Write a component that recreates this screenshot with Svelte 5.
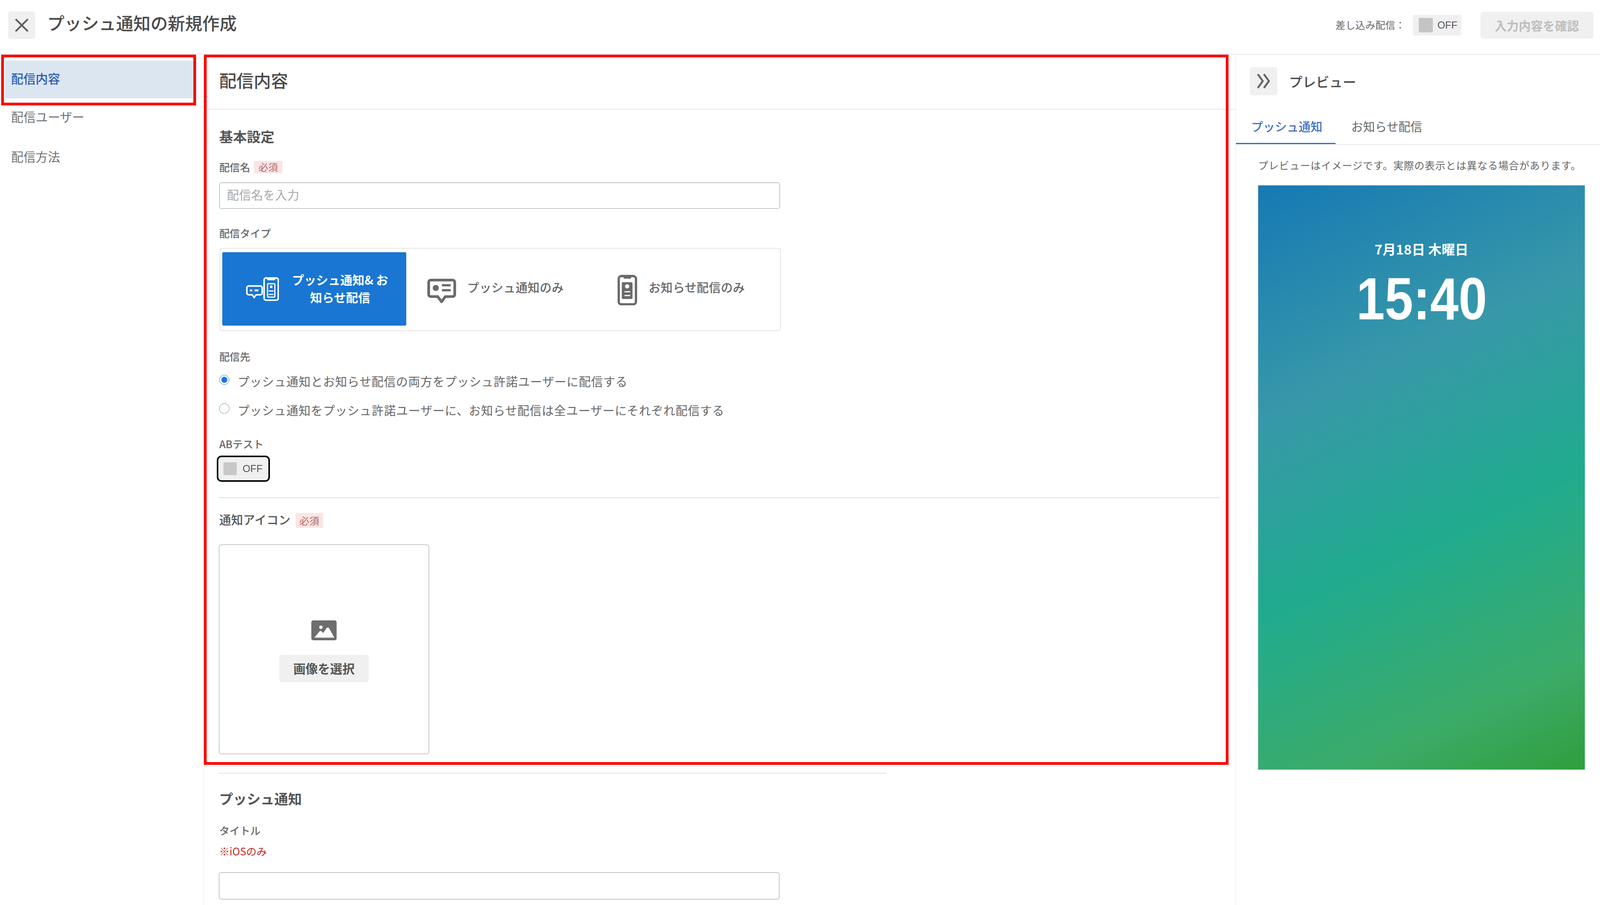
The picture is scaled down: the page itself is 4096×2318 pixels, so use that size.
<script>
  const navItems = ['配信ユーザー', '配信方法'];
</script>

<div class="app">
  <header class="topbar">
    <button class="close" aria-label="閉じる">
      <svg width="36" height="34" viewBox="0 0 36 34"><path d="M2 1 L34 33 M34 1 L2 33" fill="none" stroke="#5f5f5f" stroke-width="4.5"/></svg>
    </button>
    <h1 class="page-title">プッシュ通知の新規作成</h1>
    <div class="top-actions">
      <span class="seg-label">差し込み配信：</span>
      <div class="mini-toggle">
        <span class="knob"></span>
        <span class="off">OFF</span>
      </div>
      <button class="confirm">入力内容を確認</button>
    </div>
  </header>

  <div class="columns">
    <nav class="side">
      <div class="nav-item active">配信内容</div>
      {#each navItems as item}
        <div class="nav-item">{item}</div>
      {/each}
    </nav>

    <main class="main">
      <div class="main-head">配信内容</div>
      <div class="form">
        <h2 class="sec first">基本設定</h2>

        <div class="label-row name-row">
          <span class="lbl">配信名</span><span class="req">必須</span>
        </div>
        <input class="text name-input" placeholder="配信名を入力" />

        <div class="lbl block type-label">配信タイプ</div>
        <div class="type-box">
          <div class="type-card on">
            <svg width="87" height="62" viewBox="0 0 87 62" fill="none" stroke="#fff">
              <path d="M8 23 H38 a5 5 0 0 1 5 5 V41 a5 5 0 0 1 -5 5 H27 L22 53 L17 46 H8 a5 5 0 0 1 -5 -5 V28 a5 5 0 0 1 5 -5 Z" stroke-width="4"/>
              <path d="M11 34.5 H17 M23 34.5 H33" stroke-width="5"/>
              <rect x="48" y="2" width="37" height="58" rx="5" stroke-width="4"/>
              <path d="M54 3 L57 8 H76 L79 3 Z" fill="#fff" stroke="none"/>
              <rect x="57" y="17" width="19" height="35" rx="2" stroke-width="3"/>
              <circle cx="66.5" cy="25" r="3.5" fill="#fff" stroke="none"/>
              <path d="M60 36 H73 M60 45 H73" stroke-width="3"/>
            </svg>
            <span class="on-text">プッシュ通知&amp; お<br />知らせ配信</span>
          </div>
          <div class="type-card mid">
            <svg width="75" height="64" viewBox="0 0 75 64" fill="none" stroke="#6a6a6a">
              <path d="M9 3.5 H66 a5.5 5.5 0 0 1 5.5 5.5 V41 a5.5 5.5 0 0 1 -5.5 5.5 H47 L37 60 L27 46.5 H9 a5.5 5.5 0 0 1 -5.5 -5.5 V9 a5.5 5.5 0 0 1 5.5 -5.5 Z" stroke-width="7" stroke-linejoin="round"/>
              <circle cx="22" cy="24" r="8" fill="#6a6a6a" stroke="none"/>
              <path d="M38 17 H61 M38 30 H61" stroke-width="6"/>
            </svg>
            <span class="type-text">プッシュ通知のみ</span>
          </div>
          <div class="type-card last">
            <svg width="51" height="80" viewBox="0 0 51 80" fill="none">
              <rect x="3" y="3" width="45" height="74" rx="7" stroke="#6a6a6a" stroke-width="6"/>
              <path d="M13 3 L17 10 H34 L38 3 Z" fill="#6a6a6a"/>
              <rect x="11" y="19" width="28" height="44" rx="3" fill="#6a6a6a"/>
              <circle cx="25" cy="30" r="5.5" fill="#fff"/>
              <path d="M18 44 H33 M18 54 H33" stroke="#fff" stroke-width="3"/>
            </svg>
            <span class="type-text">お知らせ配信のみ</span>
          </div>
        </div>

        <div class="lbl block dest-label">配信先</div>
        <label class="radio r1">
          <input type="radio" name="dest" checked />
          <span>プッシュ通知とお知らせ配信の両方をプッシュ許諾ユーザーに配信する</span>
        </label>
        <label class="radio r2">
          <input type="radio" name="dest" />
          <span>プッシュ通知をプッシュ許諾ユーザーに、お知らせ配信は全ユーザーにそれぞれ配信する</span>
        </label>

        <div class="lbl block ab-label">ABテスト</div>
        <div class="ab-toggle">
          <span class="ab-knob"></span>
          <span class="ab-off">OFF</span>
        </div>

        <hr class="rule wide" />

        <div class="label-row icon-row">
          <span class="lbl-big">通知アイコン</span><span class="req big">必須</span>
        </div>
        <div class="picker">
          <svg width="66" height="52" viewBox="0 0 66 52">
            <rect width="66" height="52" rx="5" fill="#6e6e6e"/>
            <circle cx="25" cy="18" r="4.5" fill="#fff"/>
            <path d="M8 45 L21 29 Q24 26 27 29 L31 33 L40 20 Q43 17 46 20 L60 45 Z" fill="#fff"/>
          </svg>
          <button class="pick-btn">画像を選択</button>
        </div>

        <hr class="rule narrow" />

        <h2 class="sec push">プッシュ通知</h2>
        <div class="lbl block title-label">タイトル</div>
        <div class="ios">※iOSのみ</div>
        <input class="text title-input" />
      </div>
    </main>

    <aside class="preview">
      <div class="pv-head">
        <button class="pv-toggle" aria-label="閉じる">
          <svg width="36" height="38" viewBox="0 0 36 38" fill="none" stroke="#666" stroke-width="5"><path d="M3 1 L16 19 L3 37 M19 1 L32 19 L19 37"/></svg>
        </button>
        <span class="pv-title">プレビュー</span>
      </div>
      <div class="tabs">
        <div class="tab active">プッシュ通知</div>
        <div class="tab">お知らせ配信</div>
      </div>
      <p class="note">プレビューはイメージです。実際の表示とは異なる場合があります。</p>
      <div class="phone">
        <div class="date">7月18日 木曜日</div>
        <div class="time">15:40</div>
      </div>
    </aside>
  </div>

  <div class="mark mark-a"></div>
  <div class="mark mark-b"></div>
</div>

<style>
  :global(html), :global(body) {
    margin: 0;
    overflow: hidden;
    background: #fff;
  }
  .app {
    zoom: 0.981;
    position: relative;
    width: 4175px;
    height: 2364px;
    display: flex;
    flex-direction: column;
    overflow: hidden;
    background: #fff;
    color: #555;
    font-family: "Noto Sans CJK JP", "Noto Sans", sans-serif;
  }
  button {
    font-family: inherit;
    border: none;
    padding: 0;
    cursor: pointer;
  }

  /* top bar */
  .topbar {
    box-sizing: border-box;
    height: 143px;
    flex: none;
    display: flex;
    align-items: center;
    padding: 0 17px 9px 21px;
    border-bottom: 3px solid #e8e8ee;
  }
  .close {
    width: 71px;
    height: 72px;
    background: #f0f0f0;
    border-radius: 6px;
    display: flex;
    align-items: center;
    justify-content: center;
    margin-right: 31px;
  }
  .page-title {
    margin: 0;
    font-size: 45px;
    font-weight: 500;
    line-height: 50px;
    color: #4a4a4a;
    position: relative;
    top: -6px;
  }
  .top-actions {
    margin-left: auto;
    display: flex;
    align-items: center;
  }
  .seg-label {
    font-size: 26px;
    color: #666;
    margin-right: 20px;
    position: relative;
    top: -2px;
  }
  .mini-toggle {
    width: 126px;
    height: 54px;
    box-sizing: border-box;
    background: #f0f0f0;
    border-radius: 4px;
    display: flex;
    align-items: center;
    padding-left: 15px;
    margin-right: 50px;
  }
  .knob {
    width: 37px;
    height: 38px;
    background: #c4c4c4;
    border-radius: 2px;
    margin-right: 12px;
  }
  .off {
    font-size: 26px;
    color: #555;
    font-family: "Liberation Sans", sans-serif;
  }
  .confirm {
    width: 295px;
    height: 70px;
    background: #f0f0f0;
    border-radius: 8px;
    color: #bdbdbd;
    font-size: 31.5px;
    font-weight: 700;
  }

  .columns {
    flex: 1;
    display: flex;
    min-height: 0;
  }

  /* side nav */
  .side {
    box-sizing: border-box;
    width: 532px;
    flex: none;
    border-right: 2px solid #e8e8ee;
    padding: 15px 0 0 13px;
  }
  .nav-item {
    box-sizing: border-box;
    width: 492px;
    height: 104px;
    padding: 31px 0 0 16px;
    font-size: 32px;
    line-height: 32px;
    color: #707070;
  }
  .nav-item.active {
    height: 99px;
    background: #dce6f1;
    color: #2a5db0;
    font-weight: 500;
  }

  /* main form */
  .main {
    box-sizing: border-box;
    width: 2693px;
    flex: none;
    border-right: 2px solid #e8e8ee;
    min-height: 0;
  }
  .main-head {
    box-sizing: border-box;
    height: 143px;
    padding: 44px 0 0 40px;
    border-bottom: 3px solid #e8e8ee;
    font-size: 45px;
    line-height: 46px;
    color: #4a4a4a;
    font-weight: 500;
  }
  .form {
    padding-left: 40px;
  }
  .sec {
    margin: 0;
    font-size: 36px;
    line-height: 40px;
    font-weight: 700;
    color: #555;
  }
  .sec.first { margin-top: 49px; }
  .sec.push { margin-top: 43px; }
  .label-row {
    display: flex;
    align-items: center;
  }
  .name-row { margin-top: 45px; height: 33px; }
  .lbl {
    font-size: 27px;
    line-height: 30px;
    color: #666;
    font-weight: 500;
  }
  .lbl.block { display: block; }
  .req {
    width: 74px;
    height: 33px;
    line-height: 33px;
    margin-left: 10px;
    text-align: center;
    background: #fbe5e3;
    color: #b0696d;
    font-size: 25px;
  }
  .text {
    display: block;
    box-sizing: border-box;
    width: 1464px;
    border: 3px solid #c4c4c4;
    border-radius: 6px;
    padding: 0 18px;
    font-family: inherit;
    font-size: 31.5px;
    color: #555;
    outline: none;
    background: #fff;
  }
  .text::placeholder { color: #a8a8a8; opacity: 1; }
  .name-input { margin-top: 23px; height: 69px; padding-bottom: 6px; }
  .type-label { margin-top: 48px; }

  .type-box {
    box-sizing: border-box;
    margin-top: 24px;
    margin-left: 1px;
    width: 1465px;
    height: 217px;
    border: 3px solid #e4e4e4;
    border-radius: 6px;
    padding: 10px 5px 10px 5px;
    display: grid;
    grid-template-columns: 480px 487px 1fr;
  }
  .type-card {
    height: 191px;
    display: flex;
    align-items: center;
    justify-content: center;
    box-sizing: border-box;
  }
  .type-card.on {
    background: #1976d2;
    border-radius: 3px;
    gap: 34px;
    padding-left: 14px;
    color: #fff;
  }
  .on-text {
    font-size: 31.5px;
    line-height: 46px;
    font-weight: 700;
    text-align: center;
    position: relative;
    top: -2px;
  }
  .type-card.mid { padding-right: 20px; gap: 29px; }
  .type-card.last { padding-right: 22px; gap: 30px; }
  .type-card.mid svg { position: relative; top: 5px; }
  .type-card.last svg { position: relative; top: 3px; }
  .type-text {
    font-size: 31px;
    letter-spacing: 0.5px;
    color: #666;
    font-weight: 500;
    position: relative;
    top: -5px;
  }

  .dest-label { margin-top: 51px; }
  .radio {
    display: flex;
    align-items: center;
    height: 40px;
    gap: 21px;
    font-size: 31px;
    letter-spacing: 0.85px;
    color: #666;
  }
  .radio input {
    width: 27px;
    height: 27px;
    margin: 0;
    position: relative;
    top: -3px;
    accent-color: #1a73e8;
  }
  .r1 { margin-top: 30px; }
  .r2 { margin-top: 35px; }
  .ab-label { margin-top: 54px; }
  .ab-toggle {
    box-sizing: border-box;
    width: 138px;
    height: 68px;
    margin: 16px 0 0 -6px;
    border: 5px solid #000;
    border-radius: 12px;
    background: #f0f0f0;
    display: flex;
    align-items: center;
    padding-left: 13px;
    box-shadow: inset 0 0 0 1px #fff;
  }
  .ab-knob {
    width: 35px;
    height: 34px;
    background: #c8c8c8;
    border-radius: 2px;
    margin-right: 15px;
  }
  .ab-off {
    font-size: 26px;
    color: #555;
    font-family: "Liberation Sans", sans-serif;
  }
  .rule {
    border: none;
    background: #e8e8ee;
    margin: 0;
  }
  .rule.wide {
    height: 3px;
    width: 2615px;
    margin-top: 40px;
    margin-left: -2px;
  }
  .icon-row { margin-top: 39px; height: 38px; }
  .lbl-big {
    font-size: 31px;
    line-height: 34px;
    font-weight: 500;
    color: #555;
    letter-spacing: 0.3px;
    position: relative;
    top: -2px;
  }
  .req.big {
    width: 72px;
    height: 38px;
    line-height: 38px;
    margin-left: 13px;
    font-size: 26px;
  }
  .picker {
    box-sizing: border-box;
    width: 549px;
    height: 549px;
    margin-top: 43px;
    margin-left: -1px;
    border: 3px solid #c8c8c8;
    border-radius: 7px;
    display: flex;
    flex-direction: column;
    align-items: center;
    justify-content: center;
    padding-top: 9px;
    gap: 38px;
  }
  .pick-btn {
    width: 233px;
    height: 71px;
    background: #f0f0f0;
    border-radius: 6px;
    font-size: 32px;
    color: #555;
    font-weight: 700;
  }
  .rule.narrow {
    height: 4px;
    width: 1743px;
    margin-top: 47px;
    margin-left: -1px;
  }
  .title-label { margin-top: 49px; }
  .ios {
    margin-top: 24px;
    font-size: 27px;
    line-height: 30px;
    color: #c62828;
  }
  .title-input { margin-top: 40px; height: 72px; margin-left: -1px; }

  /* preview */
  .preview {
    flex: 1;
    min-width: 0;
  }
  .pv-head {
    display: flex;
    align-items: flex-start;
    height: 117px;
    padding: 32px 0 0 37px;
    box-sizing: border-box;
  }
  .pv-toggle {
    width: 71px;
    height: 74px;
    background: #f0f0f0;
    border-radius: 6px;
    display: flex;
    align-items: center;
    justify-content: center;
    margin-right: 31px;
  }
  .pv-title {
    font-size: 35px;
    line-height: 74px;
    color: #4a4a4a;
    font-weight: 500;
  }
  .tabs {
    box-sizing: border-box;
    display: flex;
    height: 118px;
    border-bottom: 3px solid #e8e8ee;
  }
  .tab {
    box-sizing: border-box;
    height: 116px;
    font-size: 31px;
    line-height: 36px;
    padding: 52px 41px 0 41px;
    color: #666;
    white-space: nowrap;
  }
  .tab.active {
    width: 260px;
    padding-left: 40px;
    padding-right: 0;
    color: #3f6fc6;
    font-weight: 500;
    border-bottom: 4px solid #1976d2;
  }
  .note {
    margin: 35px 0 0 58px;
    font-size: 26.5px;
    letter-spacing: 0.9px;
    line-height: 36px;
    color: #666;
    white-space: nowrap;
  }
  .phone {
    box-sizing: border-box;
    width: 853px;
    height: 1525px;
    margin: 35px 0 0 58px;
    padding-top: 148px;
    text-align: center;
    color: #fff;
    box-shadow: 0 0 0 2px #e8e8ee;
    background: linear-gradient(155deg, #1679b4 0%, #3898a9 32%, #20ab8f 58.6%, #3cab68 85%, #2f9e3c 100%);
  }
  .date {
    font-size: 35px;
    line-height: 36px;
    font-weight: 700;
  }
  .time {
    margin-top: 37px;
    font-family: "Liberation Sans", sans-serif;
    font-size: 155px;
    line-height: 150px;
    font-weight: 700;
    display: inline-block;
    transform: scaleX(0.86);
  }

  /* red callouts */
  .mark {
    position: absolute;
    box-sizing: border-box;
    border: 8px solid #f00;
    pointer-events: none;
  }
  .mark-a { left: 3px; top: 143px; width: 509px; height: 132px; }
  .mark-b { left: 532px; top: 143px; width: 2674px; height: 1854px; }
</style>
